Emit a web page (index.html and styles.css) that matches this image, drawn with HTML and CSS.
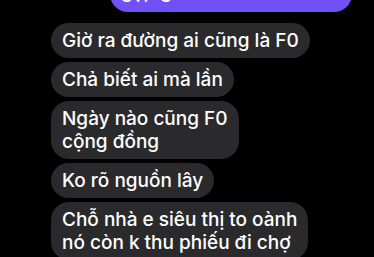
FILE: index.html
```html
<!DOCTYPE html>
<html lang="vi">
<head>
<meta charset="utf-8">
<link rel="stylesheet" href="styles.css">
</head>
<body>
<div class="thread">
  <div class="bubble mine">gặp gỡ thì thôi</div>
  <div class="bubble theirs">Giờ ra đường ai cũng là F0</div>
  <div class="bubble theirs">Chả biết ai mà lần</div>
  <div class="bubble theirs">Ngày nào cũng F0<br>cộng đồng</div>
  <div class="bubble theirs">Ko rõ nguồn lây</div>
  <div class="bubble theirs">Chỗ nhà e siêu thị to oành<br>nó còn k thu phiếu đi chợ</div>
</div>
</body>
</html>
```
FILE: styles.css
```css
html, body {
  margin: 0;
  padding: 0;
  background: #000;
  overflow: hidden;
}
.thread {
  display: flex;
  flex-direction: column;
  align-items: flex-start;
  gap: 4px;
  padding-left: 51px;
  padding-right: 22px;
  font-family: Inter, "Noto Sans", sans-serif;
  font-size: 19px;
  font-weight: 500;
  color: #fff;
}
.bubble {
  padding: 6px 11px;
  line-height: 23px;
  border-radius: 18px;
  white-space: nowrap;
}
.theirs {
  background: #2a2a2c;
}
.mine {
  align-self: flex-end;
  background: #7350f5;
  margin-top: -26px;
  padding-bottom: 9px;
  margin-bottom: 7px;
  width: 220px;
}
```
